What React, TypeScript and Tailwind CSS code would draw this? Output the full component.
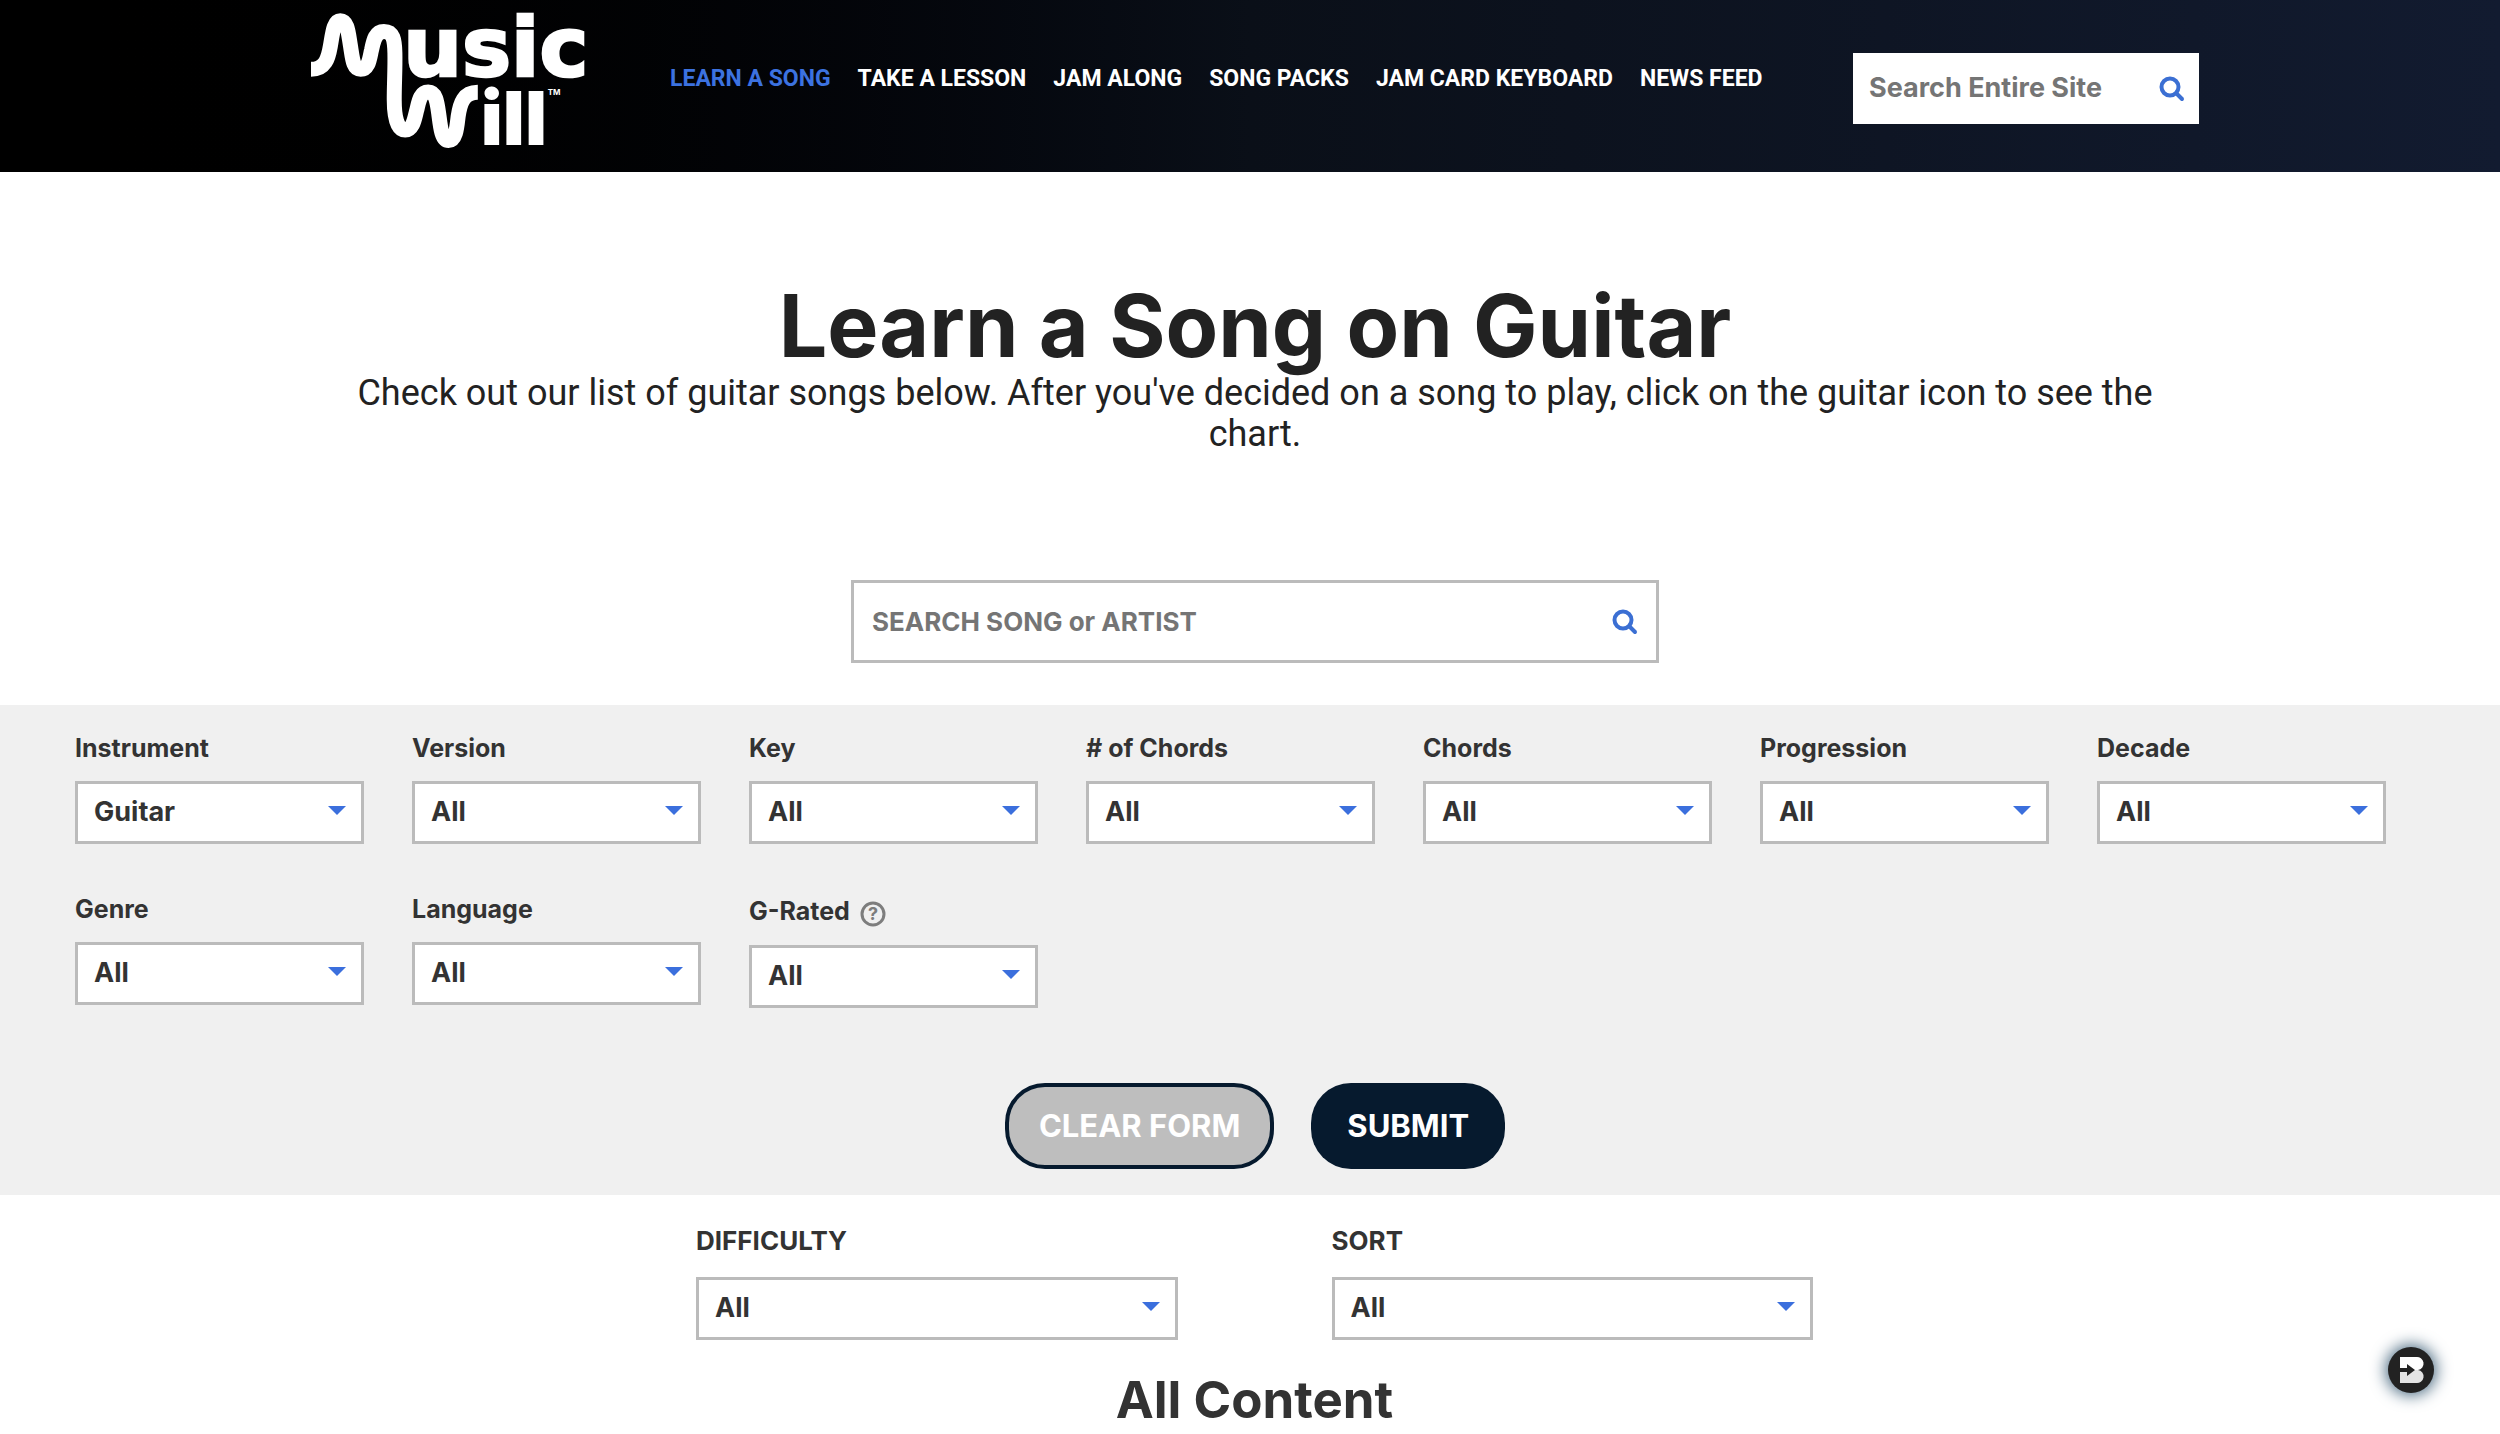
import { useState } from "react";

const NAV_LINKS = [
  "Learn a Song",
  "Take a Lesson",
  "Jam Along",
  "Song Packs",
  "Jam Card Keyboard",
  "News Feed",
];

const FILTERS = [
  { id: "instrument", label: "Instrument", options: ["Guitar", "Bass", "Keyboard", "Drums", "Ukulele"] },
  { id: "version", label: "Version", options: ["All"] },
  { id: "key", label: "Key", options: ["All"] },
  { id: "chord-count", label: "# of Chords", options: ["All"] },
  { id: "chords", label: "Chords", options: ["All"] },
  { id: "progression", label: "Progression", options: ["All"] },
  { id: "decade", label: "Decade", options: ["All"] },
  { id: "genre", label: "Genre", options: ["All"] },
  { id: "language", label: "Language", options: ["All"] },
  { id: "g-rated", label: "G-Rated", options: ["All"], help: true },
];

export default function App() {
  // Bumping the key remounts the filters with their defaults.
  const [formKey, setFormKey] = useState(0);

  return (
    <div className="min-h-screen bg-white font-['Inter',sans-serif] text-[#333]">
      <Header />

      <main>
        <section className="flex flex-col items-center pt-28 pr-[340px] pb-[42px] pl-[350px] text-center">
          <h1 className="text-[86px] leading-[84px] font-bold text-[#222]">Learn a Song on Guitar</h1>
          <p className="mt-[5px] font-['Roboto',sans-serif] text-4xl leading-[41px] text-[#222]">
            Check out our list of guitar songs below. After you've decided on a song to play, click on the guitar icon to see the chart.
          </p>
          <form
            role="search"
            onSubmit={(e) => e.preventDefault()}
            className="mt-[125px] flex h-[83px] w-full max-w-[808px] items-center border-3 border-[#bbb] bg-white pr-[18px] pl-[18px]"
          >
            <input
              type="text"
              aria-label="Search song or artist"
              placeholder="SEARCH SONG or ARTIST"
              className="min-w-0 flex-1 text-[26px] font-bold outline-none placeholder:text-[#757575]"
            />
            <button type="submit" aria-label="Search songs">
              <SearchIcon />
            </button>
          </form>
        </section>

        <form
          key={formKey}
          onSubmit={(e) => e.preventDefault()}
          className="bg-[#f0f0f0] pt-[26px] pb-[26px] pl-2.5"
        >
          <div className="grid grid-cols-7 gap-12 pr-[114px] pl-[65px]">
            {FILTERS.map((f) => (
              <div key={f.id}>
                <div className={`flex items-center gap-2.5 ${f.help ? "h-[39px]" : "h-9"}`}>
                  <label htmlFor={f.id} className="text-[25px] font-bold">
                    {f.label}
                  </label>
                  {f.help && <HelpIcon />}
                </div>
                <Select id={f.id} options={f.options} className="mt-3.5" />
              </div>
            ))}
          </div>

          <div className="mt-[75px] flex justify-center gap-[37px] text-[31px] font-bold text-white">
            <button
              type="button"
              onClick={() => setFormKey(formKey + 1)}
              className="h-[86px] rounded-[40px] border-4 border-[#061a2e] bg-[#bebebe] px-[30px] whitespace-nowrap"
            >
              CLEAR FORM
            </button>
            <button type="submit" className="h-[86px] rounded-[40px] bg-[#061a2e] px-9">
              SUBMIT
            </button>
          </div>
        </form>

        <section className="pt-7 pr-[687px] pl-[696px]">
          <div className="grid grid-cols-2 gap-[154px]">
            <div>
              <label htmlFor="difficulty" className="block text-[26px] leading-9 font-bold">
                DIFFICULTY
              </label>
              <Select id="difficulty" options={["All"]} className="mt-[18px]" />
            </div>
            <div>
              <label htmlFor="sort" className="block text-[26px] leading-9 font-bold">
                SORT
              </label>
              <Select id="sort" options={["All"]} className="mt-[18px]" />
            </div>
          </div>
          <h2 className="mt-[30px] text-center text-[51px] leading-[60px] font-bold">All Content</h2>
        </section>
      </main>

      <HelperBadge />
    </div>
  );
}

function Header() {
  return (
    <header className="flex h-[172px] items-start bg-linear-to-r from-black via-[#0a0f18] to-[#121b30] pr-[301px] pl-[311px]">
      <a href="#home" aria-label="Music Will" className="mt-[13px]">
        <Logo />
      </a>
      <nav className="mt-[63px] ml-[76px] flex gap-[27px] font-['Roboto',sans-serif] text-[23px] leading-8 font-bold whitespace-nowrap text-white uppercase">
        {NAV_LINKS.map((label, i) => (
          <a key={label} href="#nav" className={i === 0 ? "text-[#3c72e0]" : undefined}>
            {label}
          </a>
        ))}
      </nav>
      <form
        role="search"
        onSubmit={(e) => e.preventDefault()}
        className="mt-[53px] ml-auto flex h-[71px] w-[346px] items-center bg-white pr-3.5 pl-4"
      >
        <input
          type="text"
          aria-label="Search entire site"
          placeholder="Search Entire Site"
          className="min-w-0 flex-1 text-[27px] font-bold text-[#333] outline-none placeholder:text-[#757575]"
        />
        <button type="submit" aria-label="Search site">
          <SearchIcon />
        </button>
      </form>
    </header>
  );
}

function Select({ id, options, className }: { id: string; options: string[]; className: string }) {
  return (
    <div className={`relative ${className}`}>
      <select
        id={id}
        className="block h-[63px] w-full appearance-none border-3 border-[#bbb] bg-white pr-12 pl-4 text-[27px] font-bold"
      >
        {options.map((o) => (
          <option key={o}>{o}</option>
        ))}
      </select>
      <svg
        viewBox="0 0 18 9"
        aria-hidden
        className="pointer-events-none absolute top-[25px] right-[18px] h-[9px] w-[18px] fill-[#3b6fdd]"
      >
        <path d="M0 0h18L9 9z" />
      </svg>
    </div>
  );
}

function SearchIcon() {
  return (
    <svg viewBox="0 0 26 26" aria-hidden className="size-[26px] fill-none stroke-[#3b6fd3]" strokeWidth="4">
      <circle cx="11" cy="11" r="8.5" />
      <path d="M17.5 17.5l5.5 5.5" strokeLinecap="round" />
    </svg>
  );
}

function HelpIcon() {
  return (
    <svg viewBox="0 0 26 26" aria-hidden className="mt-1 size-[26px]">
      <circle cx="13" cy="13" r="11" fill="none" stroke="#7d7d7d" strokeWidth="3" />
      <text x="13" y="19" textAnchor="middle" fontSize="18" fontWeight="700" fill="#7d7d7d">
        ?
      </text>
    </svg>
  );
}

function Logo() {
  return (
    <svg viewBox="62 40 850 408" aria-hidden className="h-[136px] w-[283px] overflow-visible" fill="#fff">
      <path
        d="M62 209C105 209 114 175 120 140C127 100 130 63 150 63C172 63 174 100 180 135C187 178 188 209 211 209C236 209 238 175 244 150C250 120 256 95 281 95C309 95 313 120 314 160C315 210 312 250 312 300C312 350 320 391 345 391C370 391 374 350 380 330C386 305 390 277 414 277C438 277 441 310 446 345C451 385 455 423 475 423C497 423 500 385 504 350C510 310 520 278 563 278"
        fill="none"
        stroke="#fff"
        strokeWidth="45"
      />
      <text
        x="339"
        y="229"
        fontSize="248"
        stroke="#fff"
        strokeWidth="8"
        className="font-['DejaVu_Sans',sans-serif] font-bold"
      >
        usic
      </text>
      <text x="572" y="437" fontSize="224" className="font-black">
        ill
      </text>
      <text x="773" y="287" fontSize="24" fontWeight="700">
        TM
      </text>
    </svg>
  );
}

// Floating assistant button, pinned to the bottom-right corner.
function HelperBadge() {
  return (
    <button
      type="button"
      aria-label="Open assistant"
      className="fixed right-[66px] bottom-[41px] size-[46px] rounded-full bg-[#222] shadow-[0_0_16px_2px_#41627a]"
    >
      <svg viewBox="0 0 46 46" aria-hidden className="size-[46px]">
        <path d="M12 10h16a6.500 6.500 0 0 1 2 13H12z" fill="#fff" />
        <path d="M12 23h18a6.500 6.500 0 0 1-2 13H12z" fill="#e4e4e4" />
        <path d="M11 21h8v-4l8 6-8 6v-4h-8z" fill="#222" />
      </svg>
    </button>
  );
}
